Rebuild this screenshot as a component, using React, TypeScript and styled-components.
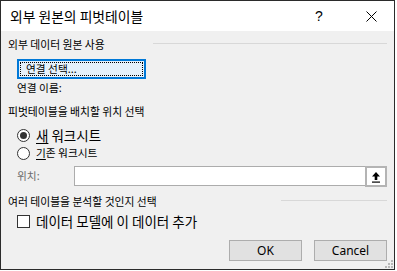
import React, { FC } from 'react';
import styled, { createGlobalStyle } from 'styled-components';

const GlobalStyle = createGlobalStyle`
  html, body {
    margin: 0;
    padding: 0;
    background: #ffffff;
  }
  body {
    font-family: "Noto Sans CJK KR", "Noto Sans", sans-serif;
    color: #000;
  }
`;

const Window = styled.div`
  width: 395px;
  height: 270px;
  box-sizing: border-box;
  border: 1px solid #2b2b2b;
  background: #f0f0f0;
  display: flex;
  flex-direction: column;
  position: relative;
`;

const TitleBar = styled.div`
  height: 30px;
  background: #ffffff;
  display: flex;
  align-items: center;
  padding-left: 9px;
`;

const Title = styled.div`
  font-size: 13.8px;
  flex: 1;
  line-height: 28px;
`;

const Help = styled.div`
  font-family: "Liberation Sans", sans-serif;
  font-size: 14px;
  width: 20px;
  text-align: center;
  margin-right: 19px;
`;

const Close = styled.div`
  width: 46px;
  height: 30px;
  display: flex;
  align-items: center;
  justify-content: center;
`;

const Body = styled.div`
  flex: 1;
  display: flex;
  flex-direction: column;
  padding: 0 7px 0 7px;
`;

const SectionRow = styled.div<{ $top: number }>`
  height: 14px;
  margin-top: ${p => p.$top}px;
  display: flex;
  align-items: center;
  font-size: 10.8px;
  line-height: 14px;
  white-space: nowrap;
`;

const Rule = styled.div<{ $width: number }>`
  margin-left: auto;
  width: ${p => p.$width}px;
  height: 1px;
  background: #d8d8d8;
  margin-top: -1px;
`;

const Indent = styled.div<{ $top: number }>`
  margin-top: ${p => p.$top}px;
  padding-left: 9px;
  display: flex;
  align-items: center;
`;

const ConnectButton = styled.div`
  width: 129px;
  height: 20px;
  box-sizing: border-box;
  border: 2px solid #0078d7;
  background: #e5f1fb;
  padding: 1px;
`;

const FocusRect = styled.div`
  height: 100%;
  box-sizing: border-box;
  border: 1px dotted #000;
  font-size: 10.7px;
  line-height: 12px;
  padding-left: 5px;
`;

const SmallLabel = styled.span<{ $disabled?: boolean }>`
  font-size: 10.7px;
  line-height: 14px;
  color: ${p => (p.$disabled ? '#6d6d6d' : '#000')};
`;

const Radio = styled.span<{ $checked?: boolean }>`
  width: 13px;
  height: 13px;
  box-sizing: border-box;
  border: 1px solid #333;
  border-radius: 50%;
  background: #fff;
  display: inline-flex;
  align-items: center;
  justify-content: center;
  margin-right: 6px;
  flex: none;

  &::after {
    content: '';
    width: 7px;
    height: 7px;
    border-radius: 50%;
    background: ${p => (p.$checked ? '#333' : 'transparent')};
  }
`;

const BigLabel = styled.span`
  font-size: 13.5px;
  line-height: 17px;
`;

const SmallOption = styled.span`
  font-size: 10.7px;
  line-height: 14px;
`;

const U = styled.span`
  text-decoration: underline;
  text-underline-offset: 2px;
`;

const LocationRow = styled.div`
  margin-top: 6px;
  padding-left: 9px;
  display: flex;
  align-items: center;
  height: 20px;
`;

const LocationLabel = styled(SmallLabel)`
  width: 57px;
`;

const Input = styled.div`
  flex: 1;
  height: 20px;
  box-sizing: border-box;
  border: 1px solid #acacac;
  border-right: none;
  background: #fff;
  display: flex;
  justify-content: flex-end;
`;

const PickButton = styled.div`
  width: 22px;
  height: 21px;
  margin-top: -1px;
  box-sizing: border-box;
  border: 2px solid #b4b4b4;
  background: #fff;
  display: flex;
  align-items: center;
  justify-content: center;
`;

const CheckRow = styled.div`
  margin-top: 4px;
  padding-left: 9px;
  height: 18px;
  display: flex;
  align-items: center;
`;

const CheckBox = styled.span`
  width: 13px;
  height: 13px;
  box-sizing: border-box;
  border: 1px solid #333;
  background: #fff;
  margin-right: 6px;
  flex: none;
`;

const Footer = styled.div`
  margin-top: 10px;
  display: flex;
  justify-content: flex-end;
  gap: 12px;
`;

const DialogButton = styled.div`
  width: 73px;
  height: 21px;
  box-sizing: border-box;
  border: 1px solid #adadad;
  background: #e1e1e1;
  font-family: "Noto Sans", sans-serif;
  font-size: 12px;
  line-height: 19px;
  text-align: center;
`;

const Grip = styled.svg`
  position: absolute;
  right: 1px;
  bottom: 1px;
`;

const App: FC = () => {
  return (
    <>
      <GlobalStyle />
      <Window>
        <TitleBar>
          <Title>외부 원본의 피벗테이블</Title>
          <Help>?</Help>
          <Close>
            <svg width="11" height="11" viewBox="0 0 11 11">
              <path d="M0.5 0.5 L10.5 10.5 M10.5 0.5 L0.5 10.5" stroke="#000" strokeWidth="1" />
            </svg>
          </Close>
        </TitleBar>
        <Body>
          <SectionRow $top={6}>
            외부 데이터 원본 사용
            <Rule $width={234} />
          </SectionRow>
          <Indent $top={8}>
            <ConnectButton>
              <FocusRect>연결 선택...</FocusRect>
            </ConnectButton>
          </Indent>
          <Indent $top={2}>
            <SmallLabel>연결 이름:</SmallLabel>
          </Indent>
          <SectionRow $top={9}>피벗테이블을 배치할 위치 선택</SectionRow>
          <Indent $top={9}>
            <Radio $checked />
            <BigLabel>
              <U>새</U> 워크시트
            </BigLabel>
          </Indent>
          <Indent $top={2}>
            <Radio />
            <SmallOption>
              <U>기</U>존 워크시트
            </SmallOption>
          </Indent>
          <LocationRow>
            <LocationLabel $disabled>위치:</LocationLabel>
            <Input>
              <PickButton>
                <svg width="12" height="12" viewBox="0 0 12 12">
                  <path d="M6 1 L10 5.5 L7.3 5.5 L7.3 9 L4.7 9 L4.7 5.5 L2 5.5 Z" fill="#000" />
                  <rect x="2" y="10.5" width="8" height="1.2" fill="#000" />
                </svg>
              </PickButton>
            </Input>
          </LocationRow>
          <SectionRow $top={8}>
            여러 테이블을 분석할 것인지 선택
            <Rule $width={106} />
          </SectionRow>
          <CheckRow>
            <CheckBox />
            <BigLabel>데이터 모델에 이 데이터 추가</BigLabel>
          </CheckRow>
          <Footer>
            <DialogButton>OK</DialogButton>
            <DialogButton>Cancel</DialogButton>
          </Footer>
        </Body>
        <Grip width="8" height="8" viewBox="0 0 8 8">
          <rect x="6" y="0" width="2" height="2" fill="#b8b8b8" />
          <rect x="3" y="3" width="2" height="2" fill="#b8b8b8" />
          <rect x="6" y="3" width="2" height="2" fill="#b8b8b8" />
          <rect x="0" y="6" width="2" height="2" fill="#b8b8b8" />
          <rect x="3" y="6" width="2" height="2" fill="#b8b8b8" />
          <rect x="6" y="6" width="2" height="2" fill="#b8b8b8" />
        </Grip>
      </Window>
    </>
  );
};

export default App;
